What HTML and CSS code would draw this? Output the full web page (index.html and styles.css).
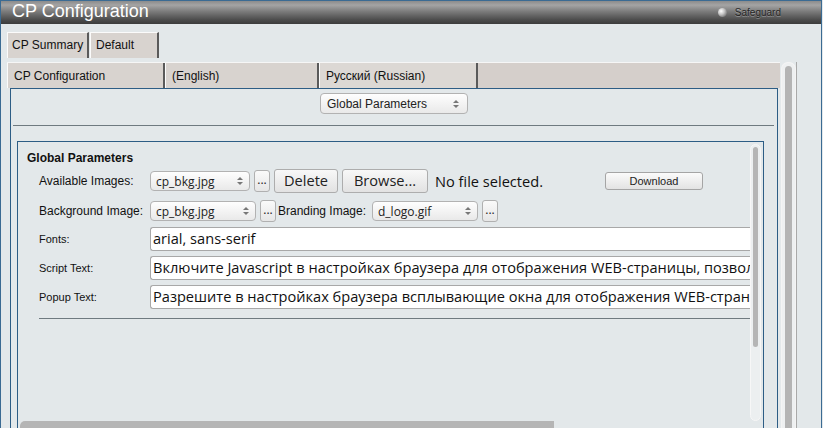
FILE: index.html
```html
<!DOCTYPE html>
<html>
<head>
<meta charset="utf-8">
<link rel="stylesheet" href="styles.css">
</head>
<body>
<div class="page">
  <div class="header">
    <span class="title">CP Configuration</span>
    <span class="safeguard"><span class="led"></span>Safeguard</span>
  </div>
  <div class="tabs1">
    <div class="tab t-sum">CP Summary</div>
    <div class="tab t-def">Default</div>
  </div>
  <div class="main">
    <div class="left">
      <div class="strip">
        <div class="tab2 t-cfg">CP Configuration</div>
        <div class="tab2 t-en">(English)</div>
        <div class="tab2 t-ru">Русский (Russian)</div>
      </div>
      <div class="panel">
        <div class="gp-row">
          <div class="select gp-select"><span>Global Parameters</span><span class="arrows"><i class="up"></i><i class="dn"></i></span></div>
        </div>
        <div class="rule"></div>
        <div class="frame">
          <div class="content">
            <div class="heading">Global Parameters</div>
            <div class="row r1">
              <span class="label">Available Images:</span>
              <div class="select fsel w100"><span>cp_bkg.jpg</span><span class="arrows"><i class="up"></i><i class="dn"></i></span></div>
              <div class="dots">...</div>
              <div class="btn b-del">Delete</div>
              <div class="btn b-br">Browse...</div>
              <span class="nofile">No file selected.</span>
              <div class="dl">Download</div>
            </div>
            <div class="row r2">
              <span class="label">Background Image:</span>
              <div class="select fsel w106"><span>cp_bkg.jpg</span><span class="arrows"><i class="up"></i><i class="dn"></i></span></div>
              <div class="dots">...</div>
              <span class="blabel">Branding Image:</span>
              <div class="select fsel w106"><span>d_logo.gif</span><span class="arrows"><i class="up"></i><i class="dn"></i></span></div>
              <div class="dots">...</div>
            </div>
            <div class="row r3">
              <span class="label small">Fonts:</span>
              <div class="input">arial, sans-serif</div>
            </div>
            <div class="row r3">
              <span class="label small">Script Text:</span>
              <div class="input">Включите Javascript в настройках браузера для отображения WEB-страницы, позвол</div>
            </div>
            <div class="row r3">
              <span class="label small">Popup Text:</span>
              <div class="input">Разрешите в настройках браузера всплывающие окна для отображения WEB-страни</div>
            </div>
            <div class="rule2"></div>
          </div>
          <div class="vbar"><div class="vthumb"></div></div>
          <div class="hbar"><div class="hthumb"></div></div>
          <div class="corner"></div>
        </div>
      </div>
    </div>
    <div class="oscroll"><div class="othumb"></div></div>
  </div>
</div>
</body>
</html>
```

FILE: styles.css
```css
html, body {
  margin: 0;
  padding: 0;
  background: #e3e8ea;
  overflow: hidden;
}
body {
  width: 823px;
  height: 428px;
  font-family: "Liberation Sans", Arial, sans-serif;
}
.page {
  width: 820px;
  height: 428px;
  border-left: 1px solid #3b6b93;
  border-right: 1px solid #3b6b93;
  background: #e3e8ea;
}
.header {
  height: 23px;
  border-top: 1px solid #3b6b93;
  background: linear-gradient(to bottom, #8c8c8c 0%, #a4a4a4 18%, #7c7c7c 45%, #4e4e4e 80%, #3c3c3c 100%);
  display: flex;
  align-items: center;
  justify-content: space-between;
  padding: 0 40px 0 11px;
}
.title {
  color: #ffffff;
  font-size: 18px;
  line-height: 23px;
  margin-top: -2px;
}
.safeguard {
  display: flex;
  align-items: center;
  font-size: 10px;
  color: #262626;
  text-shadow: 0 1px 0 rgba(255,255,255,0.3);
  letter-spacing: 0;
}
.led {
  width: 9px;
  height: 9px;
  border-radius: 50%;
  background: radial-gradient(circle at 35% 35%, #ffffff 0%, #c4c4c4 40%, #6a6a6a 85%, #4a4a4a 100%);
  margin-right: 8px;
}
.tabs1 {
  display: flex;
  margin: 8px 0 0 6px;
  height: 26px;
}
.tab {
  box-sizing: border-box;
  height: 26px;
  background: #d8d3cf;
  border-top: 1px solid #fbfbfb;
  border-left: 1px solid #fbfbfb;
  border-right: 2px solid #5a5a5a;
  font-size: 12px;
  color: #111;
  padding: 5px 0 0 4px;
}
.t-sum { width: 82px; }
.t-def { width: 69px; margin-left: 1px; padding-left: 5px; }
.main {
  display: flex;
  margin: 4px 0 0 6px;
  width: 789px;
  border-right: 1px solid #a9a9a9;
}
.left {
  width: 773px;
}
.strip {
  display: flex;
  height: 26px;
  background: #d5cfcb;
  border-top: 1px solid #f6f6f6;
  box-sizing: border-box;
}
.tab2 {
  box-sizing: border-box;
  height: 25px;
  border-left: 1px solid #fbfbfb;
  border-right: 2px solid #5a5a5a;
  font-size: 12px;
  color: #111;
  padding: 6px 0 0 6px;
  background: #d8d3cf;
}
.t-cfg { width: 158px; }
.t-en { width: 154px; }
.t-ru { width: 159px; background: #dcd8d4; }
.panel {
  margin-left: 3px;
  width: 766px;
  height: 360px;
  border: 1px solid #2d5d85;
  border-bottom: none;
}
.gp-row {
  display: flex;
  justify-content: center;
  padding-top: 4px;
}
.select {
  box-sizing: border-box;
  display: flex;
  align-items: center;
  justify-content: space-between;
  border: 1px solid #b2b2b2;
  border-radius: 4px;
  background: linear-gradient(to bottom, #fefefe, #e9e9e9);
}
.gp-select {
  width: 148px;
  height: 21px;
  font-size: 12px;
  color: #222;
  padding: 0 8px 0 6px;
}
.arrows {
  display: flex;
  flex-direction: column;
  align-items: center;
  gap: 2px;
}
.arrows i {
  display: block;
  width: 0;
  height: 0;
  border-left: 3px solid transparent;
  border-right: 3px solid transparent;
}
.arrows .up { border-bottom: 3px solid #777; }
.arrows .dn { border-top: 3px solid #777; }
.rule {
  margin: 11px 3px 0 2px;
  height: 1px;
  background: #6f7a80;
}
.frame {
  margin: 15px 0 0 6px;
  width: 745px;
  height: 300px;
  border: 1px solid #2d5d85;
  display: grid;
  grid-template-columns: 732px 13px;
  grid-template-rows: 279px 21px;
}
.content {
  overflow: hidden;
  padding: 9px 0 0 9px;
  box-sizing: border-box;
}
.heading {
  font-weight: bold;
  font-size: 12px;
  color: #111;
  line-height: 14px;
}
.row {
  display: flex;
  align-items: center;
  padding-left: 12px;
  white-space: nowrap;
}
.r1 { margin-top: 4px; height: 24px; }
.r2 { margin-top: 7px; height: 22px; }
.r3 { margin-top: 5px; height: 24px; }
.label {
  width: 111px;
  flex: none;
  font-size: 12px;
  color: #111;
}
.label.small { font-size: 11px; }
.fsel {
  height: 20px;
  font-family: "Open Sans", sans-serif;
  font-size: 12px;
  color: #222;
  padding: 0 6px 0 5px;
}
.w100 { width: 100px; }
.w106 { width: 106px; }
.dots {
  box-sizing: border-box;
  width: 16px;
  height: 22px;
  margin-left: 4px;
  border: 1px solid #b0b0b0;
  border-radius: 3px;
  background: linear-gradient(to bottom, #fafafa, #e6e6e6);
  font-family: "Open Sans", sans-serif;
  font-size: 12px;
  text-align: center;
  line-height: 18px;
  color: #222;
}
.btn {
  box-sizing: border-box;
  height: 24px;
  margin-left: 4px;
  border: 1px solid #adadad;
  border-radius: 3px;
  background: linear-gradient(to bottom, #f8f8f8, #e2e2e2);
  font-family: "Open Sans", sans-serif;
  font-size: 14.6px;
  color: #222;
  text-align: center;
  line-height: 21px;
}
.b-del { width: 64px; }
.b-br { width: 86px; }
.nofile {
  margin-left: 7px;
  font-family: "Open Sans", sans-serif;
  font-size: 14.6px;
  color: #111;
}
.dl {
  box-sizing: border-box;
  width: 98px;
  height: 18px;
  margin-left: 62px;
  border: 1px solid #a5a5a5;
  border-radius: 3px;
  background: linear-gradient(to bottom, #fbfbfb, #e3e3e3);
  font-size: 11px;
  text-align: center;
  line-height: 16px;
  color: #222;
}
.blabel {
  margin-left: 2px;
  width: 94px;
  font-size: 12px;
  color: #111;
}
.input {
  box-sizing: border-box;
  width: 640px;
  height: 24px;
  flex: none;
  border: 1px solid #a8a8a8;
  border-right: none;
  border-radius: 3px 0 0 3px;
  background: #fff;
  font-family: "Open Sans", sans-serif;
  font-size: 14.6px;
  color: #111;
  padding-left: 2px;
  line-height: 21px;
  overflow: hidden;
}
.rule2 {
  margin: 9px 0 0 12px;
  height: 1px;
  background: #6f7a80;
}
.vbar {
  margin: 2px 2px 0 0;
  border-radius: 6px;
  background: #eceff0;
  border: 1px solid #f7f7f7;
  position: relative;
}
.vthumb {
  position: absolute;
  left: 2px;
  right: 2px;
  top: 2px;
  height: 200px;
  border-radius: 4px;
  background: #b5b5b5;
}
.hbar {
  padding: 0 0 0 2px;
}
.hthumb {
  width: 534px;
  height: 10px;
  border-radius: 5px 0 0 0;
  background: #b5b5b5;
}
.corner { background: transparent; }
.oscroll {
  width: 15px;
  margin-left: 1px;
  box-sizing: border-box;
  border: 1px solid #f4f4f4;
  border-bottom: none;
  border-radius: 7px 7px 0 0;
  background: #eef0f1;
  padding: 3px 3px 0 3px;
  height: 366px;
}
.othumb {
  height: 100%;
  border-radius: 4px 4px 0 0;
  background: #b4b4b4;
}
```
